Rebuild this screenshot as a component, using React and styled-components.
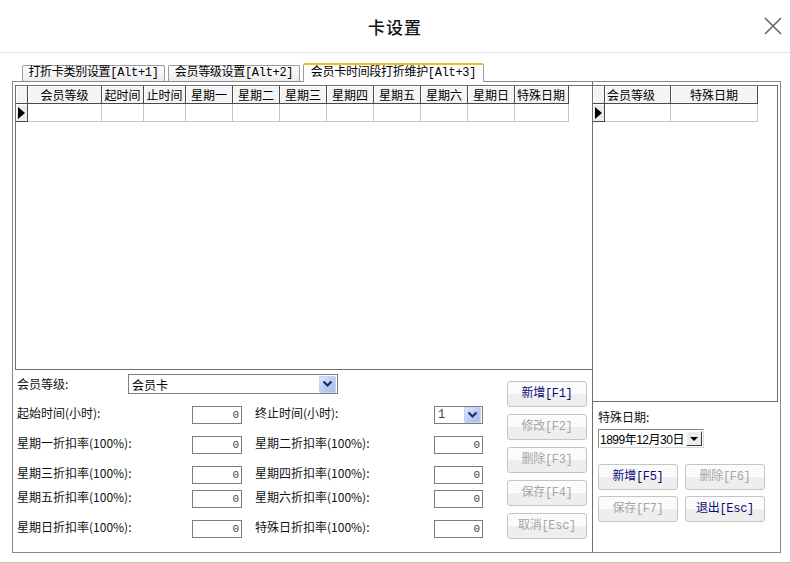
import styled, { createGlobalStyle } from "styled-components";

const GlobalStyle = createGlobalStyle`
  html, body {
    margin: 0;
    padding: 0;
    background: #fff;
  }
  body {
    font-family: "Noto Sans CJK SC", "Noto Sans", sans-serif;
    font-size: 12px;
    color: #000;
  }
`;

const Window = styled.div`
  width: 791px;
  height: 563px;
  box-sizing: border-box;
  background: #fff;
  border-bottom: 1px solid #c4c4c4;
  border-right: 1px solid #d4d4d4;
  display: flex;
  flex-direction: column;
  overflow: hidden;
`;

const TitleBar = styled.div`
  height: 52px;
  flex: none;
  border-bottom: 1px solid #e4e4e4;
  display: grid;
  grid-template-columns: 1fr auto 1fr;
  align-items: center;
`;

const Title = styled.div`
  grid-column: 2;
  font-size: 17px;
  font-weight: 500;
  color: #111;
  letter-spacing: 1px;
`;

const CloseButton = styled.div`
  justify-self: end;
  margin-right: 7px;
  width: 20px;
  height: 20px;
  display: flex;
`;

const Body = styled.div`
  padding: 10px 0 0 12px;
  display: flex;
  flex-direction: column;
`;

const TabStrip = styled.div`
  display: flex;
  align-items: flex-start;
  gap: 3px;
  padding-left: 10px;
  height: 19px;
  margin-bottom: -1px;
`;

const Tab = styled.div`
  position: relative;
  z-index: ${(p) => (p.$active ? 2 : 0)};
  box-sizing: border-box;
  width: ${(p) => p.$w}px;
  height: ${(p) => (p.$active ? 19 : 16)}px;
  margin-top: ${(p) => (p.$active ? 0 : 2)}px;
  border: 1px solid #9c9c9c;
  border-top: ${(p) => (p.$active ? "2px solid #f6b92b" : "1px solid #9c9c9c")};
  border-bottom: none;
  border-radius: 2px 2px 0 0;
  background: ${(p) =>
    p.$active ? "#fff" : "linear-gradient(#fdfdfd, #ececec)"};
  font-family: "Liberation Mono", "Noto Sans CJK SC", monospace;
  font-size: 12px;
  line-height: ${(p) => (p.$active ? 16 : 15)}px;
  text-align: center;
  white-space: nowrap;
  letter-spacing: -0.3px;
`;

const Panel = styled.div`
  width: 769px;
  height: 472px;
  box-sizing: border-box;
  border: 1px solid #8a8a8a;
  display: flex;
  background: #fff;
`;

const LeftCol = styled.div`
  width: 579px;
  flex: none;
  display: flex;
  flex-direction: column;
`;

const RightCol = styled.div`
  flex: 1;
  border-left: 1px solid #6e6e6e;
  display: flex;
  flex-direction: column;
`;

const GridBox = styled.div`
  box-sizing: border-box;
  height: ${(p) => p.$h}px;
  margin: 3px ${(p) => (p.$right ? 2 : 0)}px 0 ${(p) => (p.$right ? 0 : 2)}px;
  border: 1px solid #6e6e6e;
  border-left: ${(p) => (p.$right ? "none" : "1px solid #6e6e6e")};
  border-right: ${(p) => (p.$right ? "1px solid #6e6e6e" : "none")};
  background: #fff;
  flex: none;
`;

const GridRow = styled.div`
  display: flex;
  height: 18px;
`;

const HeadCell = styled.div`
  box-sizing: border-box;
  width: ${(p) => p.$w}px;
  height: 18px;
  flex: none;
  background: #f4f4f4;
  box-shadow: inset 1px 1px 0 #fff;
  border-right: 1px solid #4a4a4a;
  border-bottom: 1px solid #4a4a4a;
  line-height: 17px;
  text-align: ${(p) => p.$align || "center"};
  padding-left: ${(p) => (p.$align === "left" ? 2 : 0)}px;
  white-space: nowrap;
  overflow: hidden;
`;

const DataCell = styled.div`
  box-sizing: border-box;
  width: ${(p) => p.$w}px;
  height: 18px;
  flex: none;
  border-right: 1px solid #c6c6c6;
  border-bottom: 1px solid #c6c6c6;
`;

const RowMark = styled.div`
  box-sizing: border-box;
  width: 12px;
  height: 18px;
  flex: none;
  background: #ececec;
  border-right: 1px solid #4a4a4a;
  border-bottom: 1px solid #4a4a4a;
  box-shadow: inset 1px 1px 0 #fff;
  display: flex;
  align-items: center;
  padding-left: 2px;

  &::after {
    content: "";
    width: 0;
    height: 0;
    border-top: 6px solid transparent;
    border-bottom: 6px solid transparent;
    border-left: 7px solid #000;
  }
`;

const FormArea = styled.div`
  display: flex;
  padding-left: 4px;
`;

const Fields = styled.div`
  width: 490px;
  flex: none;
  display: flex;
  flex-direction: column;
`;

const FieldRow = styled.div`
  display: flex;
  align-items: flex-start;
  height: ${(p) => p.$h || 18}px;
  margin-top: ${(p) => p.$top}px;
`;

const Label = styled.div`
  width: ${(p) => p.$w}px;
  margin-left: ${(p) => p.$gap || 0}px;
  flex: none;
  line-height: ${(p) => p.$lh || 14}px;
  white-space: nowrap;
  color: #111;
`;

const NumBox = styled.div`
  box-sizing: border-box;
  width: ${(p) => p.$w}px;
  height: 18px;
  flex: none;
  border: 1px solid #7c7c7c;
  text-align: right;
  padding-right: 2px;
  font-family: "Liberation Mono", monospace;
  font-size: 11px;
  line-height: 16px;
  color: #444;
`;

const Combo = styled.div`
  box-sizing: border-box;
  width: ${(p) => p.$w}px;
  height: ${(p) => p.$h}px;
  flex: none;
  border: 1px solid #7c7c7c;
  display: flex;
  align-items: center;
  justify-content: space-between;
  padding: 0 1px 0 3px;
  font-size: 12px;
  background: #fff;
  color: ${(p) => (p.$mono ? "#444" : "#000")};
  font-family: ${(p) =>
    p.$mono ? '"Liberation Mono", monospace' : '"Noto Sans CJK SC", sans-serif'};
`;

const BlueDrop = styled.div`
  width: 17px;
  height: ${(p) => p.$h || 17}px;
  border-radius: 2px;
  background: linear-gradient(135deg, #dfe8fc 0%, #b8cbf4 55%, #a7bcef 100%);
  box-shadow: inset 0 0 0 1px #c6d4f6;
  display: flex;
  align-items: center;
  justify-content: center;
`;

const ButtonCol = styled.div`
  display: flex;
  flex-direction: column;
  gap: 7px;
  margin-top: 11px;
`;

const Button = styled.div`
  box-sizing: border-box;
  width: 80px;
  height: 26px;
  border: 1px solid #c4c4c4;
  border-radius: 3px;
  background: linear-gradient(#fbfbfb 0%, #fbfbfb 48%, #eeeeee 52%, #eeeeee 100%);
  color: ${(p) => (p.$disabled ? "#a4a4a4" : "#0a0a78")};
  font-family: "Liberation Mono", "Noto Sans CJK SC", monospace;
  font-size: 12px;
  line-height: 24px;
  text-align: center;
  white-space: nowrap;
  letter-spacing: -0.3px;
`;

const DateArea = styled.div`
  padding-left: 5px;
  display: flex;
  flex-direction: column;
`;

const DateLabel = styled.div`
  margin-top: 8px;
  line-height: 14px;
  color: #111;
`;

const DatePicker = styled.div`
  box-sizing: border-box;
  margin-top: 5px;
  width: 106px;
  height: 19px;
  border: 1px solid #8a8a8a;
  border-right-color: #d8d8d8;
  border-bottom-color: #d8d8d8;
  display: flex;
  align-items: center;
  justify-content: space-between;
  padding: 0 1px 0 1px;
  font-family: "Liberation Sans", "Noto Sans CJK SC", sans-serif;
  font-size: 12px;
  letter-spacing: -0.5px;
  background: #fff;
`;

const DateDrop = styled.div`
  box-sizing: border-box;
  width: 16px;
  height: 15px;
  background: #ececec;
  border: 1px solid;
  border-color: #fff #3c3c3c #3c3c3c #fff;
  display: flex;
  align-items: center;
  justify-content: center;

  &::after {
    content: "";
    border-left: 4px solid transparent;
    border-right: 4px solid transparent;
    border-top: 4px solid #000;
  }
`;

const DateButtons = styled.div`
  display: grid;
  grid-template-columns: 80px 80px;
  column-gap: 7px;
  row-gap: 6px;
  margin-top: 16px;
`;

const leftCols = [
  ["会员等级", 74],
  ["起时间", 42],
  ["止时间", 42],
  ["星期一", 47],
  ["星期二", 47],
  ["星期三", 47],
  ["星期四", 47],
  ["星期五", 47],
  ["星期六", 47],
  ["星期日", 47],
  ["特殊日期", 54, "left"],
];

const rightCols = [
  ["会员等级", 66, "left"],
  ["特殊日期", 87],
];

const rateRows = [
  ["起始时间(小时):", "终止时间(小时):", 12, true],
  ["星期一折扣率(100%):", "星期二折扣率(100%):", 12],
  ["星期三折扣率(100%):", "星期四折扣率(100%):", 12],
  ["星期五折扣率(100%):", "星期六折扣率(100%):", 6],
  ["星期日折扣率(100%):", "特殊日折扣率(100%):", 12],
];

function Chevron() {
  return (
    <svg width="11" height="8" viewBox="0 0 11 8">
      <polyline points="1.5,1.5 5.5,5.5 9.5,1.5" fill="none" stroke="#1d2c66" strokeWidth="2.2" />
    </svg>
  );
}

function Grid({ cols, height, right }) {
  return (
    <GridBox $h={height} $right={right}>
      <GridRow>
        <HeadCell $w={12} />
        {cols.map(([t, w, a]) => (
          <HeadCell key={t} $w={w} $align={a}>
            {t}
          </HeadCell>
        ))}
      </GridRow>
      <GridRow>
        <RowMark />
        {cols.map(([t, w]) => (
          <DataCell key={t} $w={w} />
        ))}
      </GridRow>
    </GridBox>
  );
}

export default function App() {
  return (
    <>
      <GlobalStyle />
      <Window>
        <TitleBar>
          <Title>卡设置</Title>
          <CloseButton>
            <svg width="20" height="20" viewBox="0 0 20 20">
              <path d="M2 2 L18 18 M18 2 L2 18" stroke="#6a6a6a" strokeWidth="1.7" />
            </svg>
          </CloseButton>
        </TitleBar>
        <Body>
          <TabStrip>
            <Tab $w={143}>打折卡类别设置[Alt+1]</Tab>
            <Tab $w={132}>会员等级设置[Alt+2]</Tab>
            <Tab $w={181} $active>
              会员卡时间段打折维护[Alt+3]
            </Tab>
          </TabStrip>
          <Panel>
            <LeftCol>
              <Grid cols={leftCols} height={285} />
              <FormArea>
                <Fields>
                  <FieldRow $top={4} $h={20}>
                    <Label $w={111} $lh={20}>
                      会员等级:
                    </Label>
                    <Combo $w={210} $h={20}>
                      <span>会员卡</span>
                      <BlueDrop>
                        <Chevron />
                      </BlueDrop>
                    </Combo>
                  </FieldRow>
                  {rateRows.map(([a, b, top, first]) => (
                    <FieldRow key={a} $top={top}>
                      <Label $w={175}>{a}</Label>
                      <NumBox $w={50}>0</NumBox>
                      <Label $w={179} $gap={13}>
                        {b}
                      </Label>
                      {first ? (
                        <Combo $w={49} $h={18} $mono>
                          <span>1</span>
                          <BlueDrop $h={16}>
                            <Chevron />
                          </BlueDrop>
                        </Combo>
                      ) : (
                        <NumBox $w={49}>0</NumBox>
                      )}
                    </FieldRow>
                  ))}
                </Fields>
                <ButtonCol>
                  <Button>新增[F1]</Button>
                  <Button $disabled>修改[F2]</Button>
                  <Button $disabled>删除[F3]</Button>
                  <Button $disabled>保存[F4]</Button>
                  <Button $disabled>取消[Esc]</Button>
                </ButtonCol>
              </FormArea>
            </LeftCol>
            <RightCol>
              <Grid cols={rightCols} height={317} right />
              <DateArea>
                <DateLabel>特殊日期:</DateLabel>
                <DatePicker>
                  <span>1899年12月30日</span>
                  <DateDrop />
                </DatePicker>
                <DateButtons>
                  <Button>新增[F5]</Button>
                  <Button $disabled>删除[F6]</Button>
                  <Button $disabled>保存[F7]</Button>
                  <Button>退出[Esc]</Button>
                </DateButtons>
              </DateArea>
            </RightCol>
          </Panel>
        </Body>
      </Window>
    </>
  );
}
